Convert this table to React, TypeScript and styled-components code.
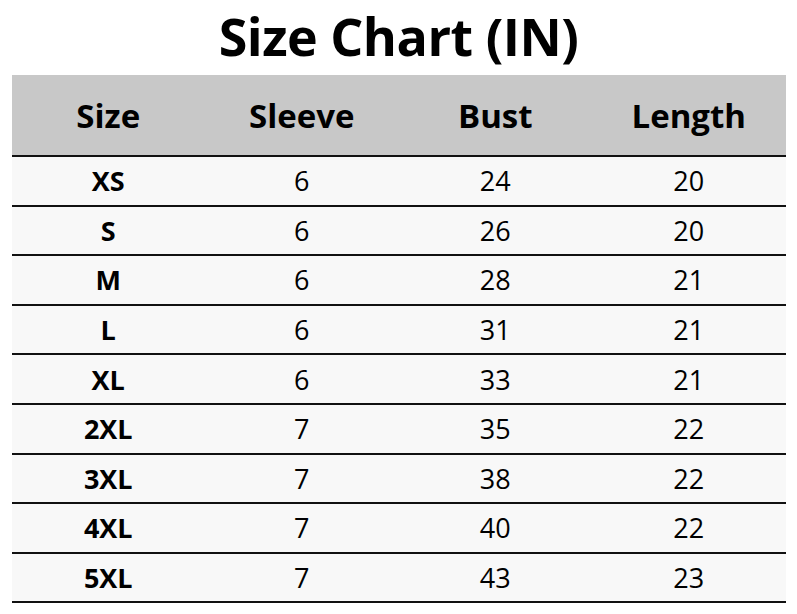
import styled, {createGlobalStyle} from "styled-components";

const GlobalStyle = createGlobalStyle`
  html, body {
    margin: 0;
    padding: 0;
    background: #ffffff;
  }
  body {
    font-family: "Open Sans", "Noto Sans", "Liberation Sans", sans-serif;
    color: #000;
  }
`;

const Page = styled.div`
  width: 797px;
  height: 614px;
  display: flex;
  flex-direction: column;
  align-items: center;
  overflow: hidden;
`;

const Title = styled.h1`
  margin: 0;
  padding-bottom: 4px;
  line-height: 71px;
  font-size: 52px;
  font-weight: 700;
  letter-spacing: -0.5px;
  white-space: nowrap;
`;

const Table = styled.div`
  width: 774px;
  display: grid;
  grid-template-columns: repeat(4, 1fr);
`;

const HeadCell = styled.div`
  height: 80px;
  background: #c8c8c8;
  border-bottom: 2px solid #111;
  display: flex;
  align-items: center;
  justify-content: center;
  font-size: 33px;
  font-weight: 700;
`;

const Cell = styled.div<{ $bold?: boolean }>`
  height: 47.6px;
  background: #f8f8f8;
  border-bottom: 2px solid #111;
  display: flex;
  align-items: center;
  justify-content: center;
  font-size: 27px;
  font-weight: ${(p) => (p.$bold ? 700 : 400)};
`;

const rows: [string, number, number, number][] = [
    ["XS", 6, 24, 20],
    ["S", 6, 26, 20],
    ["M", 6, 28, 21],
    ["L", 6, 31, 21],
    ["XL", 6, 33, 21],
    ["2XL", 7, 35, 22],
    ["3XL", 7, 38, 22],
    ["4XL", 7, 40, 22],
    ["5XL", 7, 43, 23],
];

const App = () => {
    return (
        <>
            <GlobalStyle/>
            <Page>
                <Title>Size Chart (IN)</Title>
                <Table>
                    {["Size", "Sleeve", "Bust", "Length"].map((h) => (
                        <HeadCell key={h}>{h}</HeadCell>
                    ))}
                    {rows.flatMap(([size, sleeve, bust, length]) => [
                        <Cell key={size} $bold>{size}</Cell>,
                        <Cell key={size + "s"}>{sleeve}</Cell>,
                        <Cell key={size + "b"}>{bust}</Cell>,
                        <Cell key={size + "l"}>{length}</Cell>,
                    ])}
                </Table>
            </Page>
        </>
    );
};

export default App;
